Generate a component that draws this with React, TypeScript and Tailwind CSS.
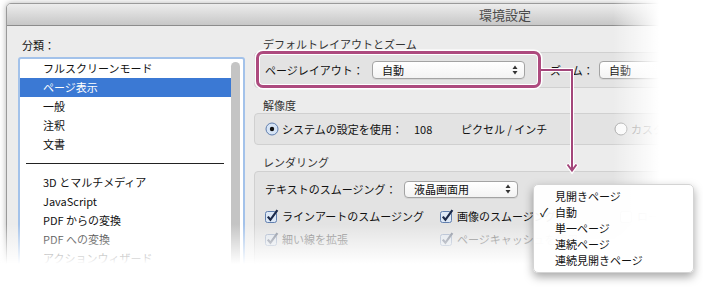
import React from "react";

const listItems: { label: string; kind?: "sel" | "sep" | "dim" }[] = [
  { label: "フルスクリーンモード" },
  { label: "ページ表示", kind: "sel" },
  { label: "一般" },
  { label: "注釈" },
  { label: "文書" },
  { label: "", kind: "sep" },
  { label: "3D とマルチメディア" },
  { label: "JavaScript" },
  { label: "PDF からの変換" },
  { label: "PDF への変換" },
  { label: "アクションウィザード" },
];

const menuItems = ["見開きページ", "自動", "単一ページ", "連続ページ", "連続見開きページ"];

function Arrows() {
  return (
    <svg width="6" height="10" viewBox="0 0 6 10">
      <path d="M3 0.5 L5.5 4 L0.5 4 Z" fill="#333" />
      <path d="M3 9.5 L5.5 6 L0.5 6 Z" fill="#333" />
    </svg>
  );
}

function Select({ value, className }: { value: string; className: string }) {
  return (
    <div
      className={`flex items-center justify-between rounded-[4px] border border-[#a3a3a3] bg-linear-to-b from-white to-[#f3f3f3] pl-[9px] pr-[6px] shadow-[0_1px_0_rgba(0,0,0,0.06)] ${className}`}
    >
      <span>{value}</span>
      <Arrows />
    </div>
  );
}

function Radio({ on }: { on?: boolean }) {
  return (
    <svg width="14" height="14" viewBox="0 0 14 14">
      <circle cx="7" cy="7" r="6" fill={on ? "#d6e4f5" : "#fafafa"} stroke={on ? "#5f7dad" : "#a8a8a8"} />
      {on && <circle cx="7" cy="7" r="2.2" fill="#111" />}
    </svg>
  );
}

function Check({ on, dim }: { on?: boolean; dim?: boolean }) {
  return (
    <svg width="14" height="14" viewBox="0 0 14 14" className={dim ? "opacity-45" : ""}>
      <rect x="0.5" y="2.5" width="11" height="11" rx="2" fill={on ? "#dde8f6" : "#fafafa"} stroke={on ? "#617fae" : "#a8a8a8"} />
      {on && <path d="M2.8 7.6 L5.4 10.8 L12.4 1.2" stroke="#1c2a4a" strokeWidth="2.2" fill="none" />}
    </svg>
  );
}

export default function App() {
  return (
    <div className="relative h-[292px] w-[703px] overflow-hidden bg-white font-['Noto_Sans_CJK_JP','Noto_Sans',sans-serif] text-[11px] text-[#111]">
      {/* window */}
      <div className="ml-[6px] mt-[3px] h-[310px] w-[998px] overflow-hidden rounded-t-[5px] border border-[#9a9a9a] bg-[#ececec] shadow-[0_0_6px_rgba(0,0,0,0.3)]">
        <div className="flex h-[22px] items-center justify-center border-b border-[#8c8c8c] bg-linear-to-b from-[#ededed] to-[#c7c7c7] text-[13px] text-[#4a4a4a]">
          環境設定
        </div>
        <div className="flex">
          {/* categories */}
          <div className="w-[247px] shrink-0 pl-[11px] pt-[11px]">
            <div className="mb-[4px] pl-[4px] leading-[16px]">分類：</div>
            <div className="flex h-[240px] w-[227px] rounded-[3px] border-2 border-[#a3c2ea] bg-white">
              <div className="flex-1">
                {listItems.map((it, i) =>
                  it.kind === "sep" ? (
                    <div key={i} className="flex h-[19px] items-center pl-[6px] pr-[7px]">
                      <div className="h-px w-full bg-[#222]" />
                    </div>
                  ) : (
                    <div
                      key={i}
                      className={`h-[19px] pl-[23px] leading-[19px] ${it.kind === "sel" ? "bg-[#3b79d4] text-white" : ""}`}
                    >
                      {it.label}
                    </div>
                  )
                )}
              </div>
              <div className="w-[12px] pt-[3px]">
                <div className="h-[230px] w-[9px] rounded-full bg-[#c4c4c4]" />
              </div>
            </div>
          </div>

          {/* settings */}
          <div className="w-[740px] shrink-0">
            <div className="pl-[9px] pt-[10px] leading-[16px] text-[#333]">デフォルトレイアウトとズーム</div>
            <div className="flex h-[36px] items-center rounded-[4px] border border-[#d0d0d0] bg-[#e3e3e3] pl-[10px]">
              <span className="w-[107px]">ページレイアウト：</span>
              <Select value="自動" className="h-[18px] w-[153px]" />
              <span className="ml-[25px] w-[49px]">ズーム：</span>
              <Select value="自動" className="h-[18px] w-[130px]" />
            </div>

            <div className="mt-[9px] pl-[9px] leading-[16px] text-[#333]">解像度</div>
            <div className="flex h-[32px] items-center rounded-[4px] border border-[#d0d0d0] bg-[#e3e3e3] pl-[10px]">
              <Radio on />
              <span className="ml-[3px] w-[132px]">システムの設定を使用：</span>
              <span className="w-[47px]">108</span>
              <span className="w-[153px]">ピクセル / インチ</span>
              <Radio />
              <span className="ml-[3px] text-[#888]">カスタム解像度</span>
            </div>

            <div className="mt-[9px] pl-[9px] leading-[16px] text-[#333]">レンダリング</div>
            <div className="mt-[1px] h-[140px] rounded-[4px] border border-[#d0d0d0] bg-[#e3e3e3] pl-[10px] pt-[8px]">
              <div className="flex h-[18px] items-center">
                <span className="w-[139px]">テキストのスムージング：</span>
                <Select value="液晶画面用" className="h-[17px] w-[114px]" />
              </div>
              <div className="mt-[9px] flex h-[18px] items-center">
                <div className="flex w-[175px] items-center gap-[3px]">
                  <Check on />
                  <span>ラインアートのスムージング</span>
                </div>
                <div className="flex w-[180px] items-center gap-[3px]">
                  <Check on />
                  <span>画像のスムージング</span>
                </div>
                <div className="flex items-center gap-[3px]">
                  <Check />
                  <span>ローカルフォントを使用</span>
                </div>
              </div>
              <div className="mt-[5px] flex h-[18px] items-center text-[#7c7c7c]">
                <div className="flex w-[175px] items-center gap-[3px]">
                  <Check on dim />
                  <span>細い線を拡張</span>
                </div>
                <div className="flex w-[180px] items-center gap-[3px]">
                  <Check on dim />
                  <span>ページキャッシュを使用</span>
                </div>
              </div>
            </div>
          </div>
        </div>
      </div>

      {/* fades */}
      <div className="absolute bottom-0 right-0 top-0 w-[90px] bg-[linear-gradient(to_right,rgba(255,255,255,0),#fff_46px)]" />
      <div className="absolute bottom-0 left-0 right-0 top-[224px] bg-[linear-gradient(to_bottom,rgba(255,255,255,0),#fff_40px)]" />

      {/* callout */}
      <div className="absolute left-[256px] top-[51px] h-[37px] w-[285px] rounded-[7px] border-[3px] border-[#ad4a7e] shadow-[0_0_0_1.5px_#fff,inset_0_0_0_1px_#fff]" />
      <svg className="absolute left-[536px] top-[64px]" width="44" height="112" viewBox="0 0 44 112">
        <path d="M5 6 H36 V106" stroke="#fff" strokeWidth="4" fill="none" />
        <path d="M31 100 L36 107 L41 100" stroke="#fff" strokeWidth="4" fill="none" />
        <path d="M5 6 H36 V106" stroke="#a3467a" strokeWidth="2" fill="none" />
        <path d="M31.5 100.5 L36 106.5 L40.5 100.5" stroke="#a3467a" strokeWidth="2" fill="none" />
      </svg>

      {/* popup menu */}
      <div className="absolute left-[533px] top-[184px] h-[89px] w-[161px] rounded-[5px] border border-[#d4d4d4] bg-[rgba(255,255,255,0.95)] pt-[3px] shadow-[0_4px_10px_rgba(0,0,0,0.35)]">
        {menuItems.map((m) => (
          <div key={m} className="flex h-[16px] items-center leading-[16px]">
            <span className="w-[21px] pl-[6px] text-[12px]">{m === "自動" ? "✓" : ""}</span>
            <span>{m}</span>
          </div>
        ))}
      </div>
    </div>
  );
}
